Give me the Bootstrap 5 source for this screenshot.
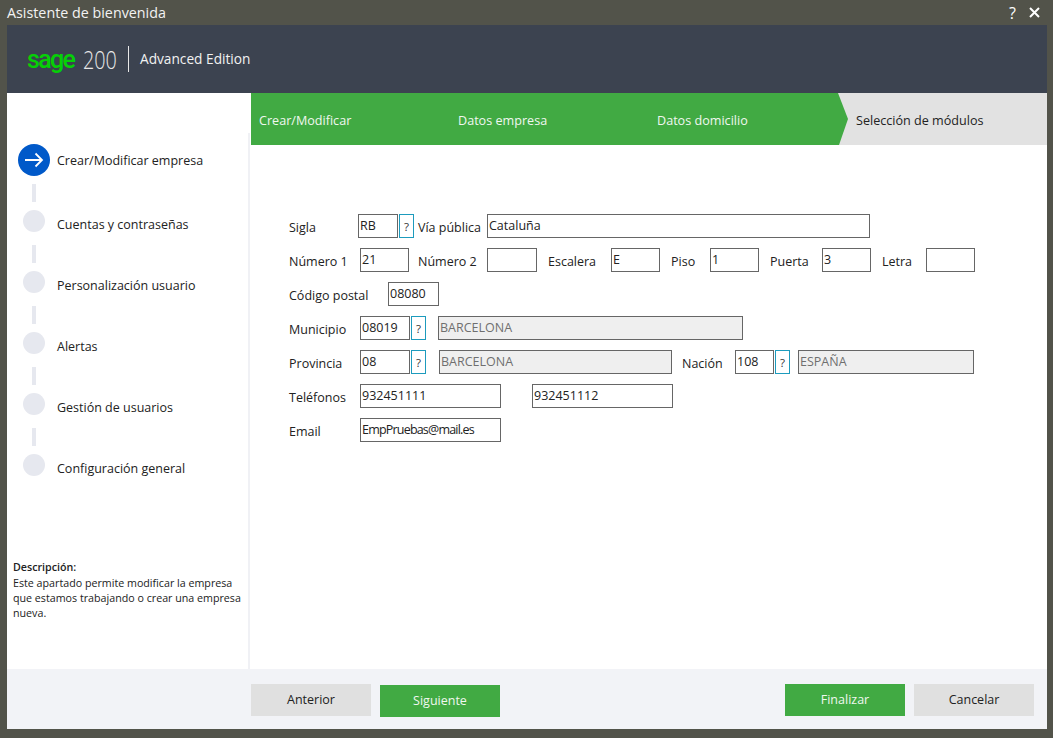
<!DOCTYPE html>
<html lang="es">
<head>
  <meta charset="UTF-8">
  <meta name="viewport" content="width=device-width, initial-scale=1.0">
  <title>Asistente de bienvenida</title>
  <link href="https://cdn.jsdelivr.net/npm/bootstrap@5.3.1/dist/css/bootstrap.min.css" rel="stylesheet">
  <style>
    html, body { height: 100%; }
    body {
      background: #52534a;
      font-family: "Open Sans", "Noto Sans", sans-serif;
      font-size: 12px;
      color: #222;
      overflow: hidden;
    }
    .ventana { height: 738px; padding: 0 6px 9px 7px; }
    .barra-titulo { height: 25px; color: #f2f2f2; font-size: 14.3px; padding-right: 7px; }
    .barra-titulo svg { display: block; }
    .ayuda-titulo { font-size: 16px; line-height: 1; color: #fff; margin-right: 13px; }
    .cabecera { height: 68px; background: #3c4350; color: #fff; padding-left: 20px; }
    .logo-sage { font-family: Roboto, sans-serif; color: #06d006; font-size: 25px; font-weight: 500; letter-spacing: -1.7px; line-height: 1; width: 46px; margin-top: 1px; }
    .logo-num { display: inline-block; width: 33px; margin-left: 10px; font-size: 26px; font-weight: 300; color: #e8e8e8; line-height: 1; transform: scaleX(.76); transform-origin: left center; white-space: nowrap; }
    .logo-sep { width: 1px; height: 26px; background: #e8e8e8; margin: 0 11px 0 12px; }
    .logo-ed { font-size: 13.7px; color: #f2f2f2; }
    .cuerpo { height: 576px; background: #fff; }
    .lateral { width: 243px; padding-top: 40px; }
    .lateral-int { height: 100%; border-right: 2px solid #f0f1f5; padding-top: 11px; }
    .paso { height: 32px; padding-left: 11px; font-size: 12.5px; }
    .circulo { width: 32px; height: 32px; border-radius: 50%; flex: none; }
    .circulo-on { background: #0059c9; }
    .circulo-off { width: 22px; height: 22px; margin: 0 5px; background: #e6e8ef; }
    .paso-txt { margin-left: 7px; padding-top: 2px; }
    .paso-txt-b { margin-left: 7px; padding-top: 8px; }
    .conector { width: 4px; height: 18px; background: #e6e8ef; margin: 8px 0 3px 25px; }
    .descripcion { font-size: 10.7px; line-height: 15px; padding: 0 6px; margin-top: 79px; }
    .descripcion-tit { margin-bottom: 1px; font-weight: 600; }
    .principal { flex: 1; margin-left: 1px; }
    .pasos-top { height: 52px; background: #e2e2e2; }
    .flecha { width: 597px; flex: none; background: #41aa43; color: #f0f7f0; clip-path: polygon(0 0, 587px 0, 597px 26px, 588px 100%, 0 100%); font-size: 12.6px; padding: 5px 0 0 8px; }
    .flecha span { width: 199px; flex: none; }
    .flecha-gris { padding: 5px 0 0 8px; font-size: 12.6px; }
    .formulario { padding: 69px 0 0 38px; font-size: 12.5px; }
    .fila { height: 24px; margin-bottom: 10px; }
    .fila label { flex: none; padding-top: 4px; line-height: 20px; }
    .campo { height: 24px; border: 1px solid #666; background: #fff; font-size: 12.5px; line-height: 18px; padding: 0 0 2px 1px; color: #222; flex: none; border-radius: 0; outline: none; }
    .campo:disabled { background: #efefef; color: #6f6f6f; }
    .correo { letter-spacing: -.8px; }
    .btn-ayuda { width: 15px; height: 24px; margin-left: 1px; border: 1px solid #1d9bbd; background: #fff; font-size: 11.5px; line-height: 24px; text-align: center; padding: 0; flex: none; color: #333; }
    .pie { height: 60px; background: #f2f3f7; padding: 15px 13px 0 244px; }
    .grupo-pie { gap: 9px; }
    .boton { width: 120px; height: 32px; border: 0; border-radius: 0; font-size: 12.5px; padding: 0; }
    .boton-gris, .boton-gris:hover { background: #e0e0e0; color: #222; }
    .boton-verde, .boton-verde:hover { background: #41aa43; color: #f0f7f0; }
    .baja-1 { margin-top: 1px; }

    /* anchos y huecos del formulario */
    .l-69 { width: 69px; }
    .l-71 { width: 71px; }
    .l-99 { width: 99px; }
    .l-63 { width: 63px; }
    .l-39 { width: 39px; }
    .l-52 { width: 52px; }
    .l-44 { width: 44px; }
    .l-53 { width: 53px; }
    .c-39 { width: 39px; }
    .c-40 { width: 40px; }
    .c-49 { width: 49px; }
    .c-50 { width: 50px; }
    .c-51 { width: 51px; }
    .c-141 { width: 141px; }
    .c-176 { width: 176px; }
    .c-233 { width: 233px; }
    .c-305 { width: 305px; }
    .c-383 { width: 383px; }
    .hueco-4 { margin-left: 4px; }
    .hueco-8 { margin-left: 8px; }
    .hueco-9 { margin-left: 9px; }
    .hueco-10 { margin-left: 10px; }
    .hueco-11 { margin-left: 11px; }
    .hueco-12 { margin-left: 12px; }
    .hueco-13 { margin-left: 13px; }
    .hueco-31 { margin-left: 31px; }
  </style>
</head>
<body>
  <div class="ventana d-flex flex-column">
    <div class="barra-titulo d-flex align-items-center justify-content-between">
      <span>Asistente de bienvenida</span>
      <div class="d-flex align-items-center">
        <span class="ayuda-titulo">?</span>
        <svg width="11" height="11" viewBox="0 0 11 11"><path d="M1 1l9 9M10 1l-9 9" stroke="#fff" stroke-width="2" fill="none"/></svg>
      </div>
    </div>

    <div class="cabecera d-flex align-items-center">
      <span class="logo-sage">sage</span>
      <span class="logo-num">200</span>
      <span class="logo-sep"></span>
      <span class="logo-ed">Advanced Edition</span>
    </div>

    <div class="cuerpo d-flex">
      <div class="lateral">
        <div class="lateral-int">
          <div class="paso d-flex align-items-center">
            <span class="circulo circulo-on d-flex align-items-center justify-content-center">
              <svg width="20" height="16" viewBox="0 0 20 16"><path d="M1 8h17M11.5 1.500L18 8l-6.500 6.500" stroke="#fff" stroke-width="1.800" fill="none"/></svg>
            </span>
            <span class="paso-txt">Crear/Modificar empresa</span>
          </div>
          <div class="conector"></div>
          <div class="paso d-flex align-items-center"><span class="circulo circulo-off"></span><span class="paso-txt-b">Cuentas y contraseñas</span></div>
          <div class="conector"></div>
          <div class="paso d-flex align-items-center"><span class="circulo circulo-off"></span><span class="paso-txt-b">Personalización usuario</span></div>
          <div class="conector"></div>
          <div class="paso d-flex align-items-center"><span class="circulo circulo-off"></span><span class="paso-txt-b">Alertas</span></div>
          <div class="conector"></div>
          <div class="paso d-flex align-items-center"><span class="circulo circulo-off"></span><span class="paso-txt-b">Gestión de usuarios</span></div>
          <div class="conector"></div>
          <div class="paso d-flex align-items-center"><span class="circulo circulo-off"></span><span class="paso-txt-b">Configuración general</span></div>
          <div class="descripcion">
            <div class="descripcion-tit">Descripción:</div>
            Este apartado permite modificar la empresa que estamos trabajando o crear una empresa nueva.
          </div>
        </div>
      </div>

      <div class="principal">
        <div class="pasos-top d-flex">
          <div class="flecha d-flex align-items-center">
            <span>Crear/Modificar</span><span>Datos empresa</span><span>Datos domicilio</span>
          </div>
          <div class="flecha-gris d-flex align-items-center">Selección de módulos</div>
        </div>

        <div class="formulario">
          <div class="fila d-flex">
            <label class="l-69">Sigla</label>
            <input class="campo c-40" value="RB">
            <button class="btn-ayuda">?</button>
            <label class="l-69 hueco-4">Vía pública</label>
            <input class="campo c-383" value="Cataluña">
          </div>
          <div class="fila d-flex">
            <label class="l-71">Número 1</label>
            <input class="campo c-49" value="21">
            <label class="l-69 hueco-9">Número 2</label>
            <input class="campo c-50">
            <label class="l-63 hueco-11">Escalera</label>
            <input class="campo c-49" value="E">
            <label class="l-39 hueco-11">Piso</label>
            <input class="campo c-49" value="1">
            <label class="l-52 hueco-11">Puerta</label>
            <input class="campo c-49" value="3">
            <label class="l-44 hueco-11">Letra</label>
            <input class="campo c-49">
          </div>
          <div class="fila d-flex">
            <label class="l-99">Código postal</label>
            <input class="campo c-51" value="08080">
          </div>
          <div class="fila d-flex">
            <label class="l-71">Municipio</label>
            <input class="campo c-50" value="08019">
            <button class="btn-ayuda">?</button>
            <input class="campo c-305 hueco-12" value="BARCELONA" disabled>
          </div>
          <div class="fila d-flex">
            <label class="l-71">Provincia</label>
            <input class="campo c-50" value="08">
            <button class="btn-ayuda">?</button>
            <input class="campo c-233 hueco-13" value="BARCELONA" disabled>
            <label class="l-53 hueco-10">Nación</label>
            <input class="campo c-39" value="108">
            <button class="btn-ayuda">?</button>
            <input class="campo c-176 hueco-8" value="ESPAÑA" disabled>
          </div>
          <div class="fila d-flex">
            <label class="l-71">Teléfonos</label>
            <input class="campo c-141" value="932451111">
            <input class="campo c-141 hueco-31" value="932451112">
          </div>
          <div class="fila d-flex">
            <label class="l-71">Email</label>
            <input class="campo c-141 correo" value="EmpPruebas@mail.es">
          </div>
        </div>
      </div>
    </div>

    <div class="pie d-flex justify-content-between">
      <div class="d-flex grupo-pie">
        <button class="btn boton boton-gris">Anterior</button>
        <button class="btn boton boton-verde baja-1">Siguiente</button>
      </div>
      <div class="d-flex grupo-pie">
        <button class="btn boton boton-verde">Finalizar</button>
        <button class="btn boton boton-gris">Cancelar</button>
      </div>
    </div>
  </div>
  <script src="https://cdn.jsdelivr.net/npm/bootstrap@5.3.1/dist/js/bootstrap.bundle.min.js"></script>
</body>
</html>
